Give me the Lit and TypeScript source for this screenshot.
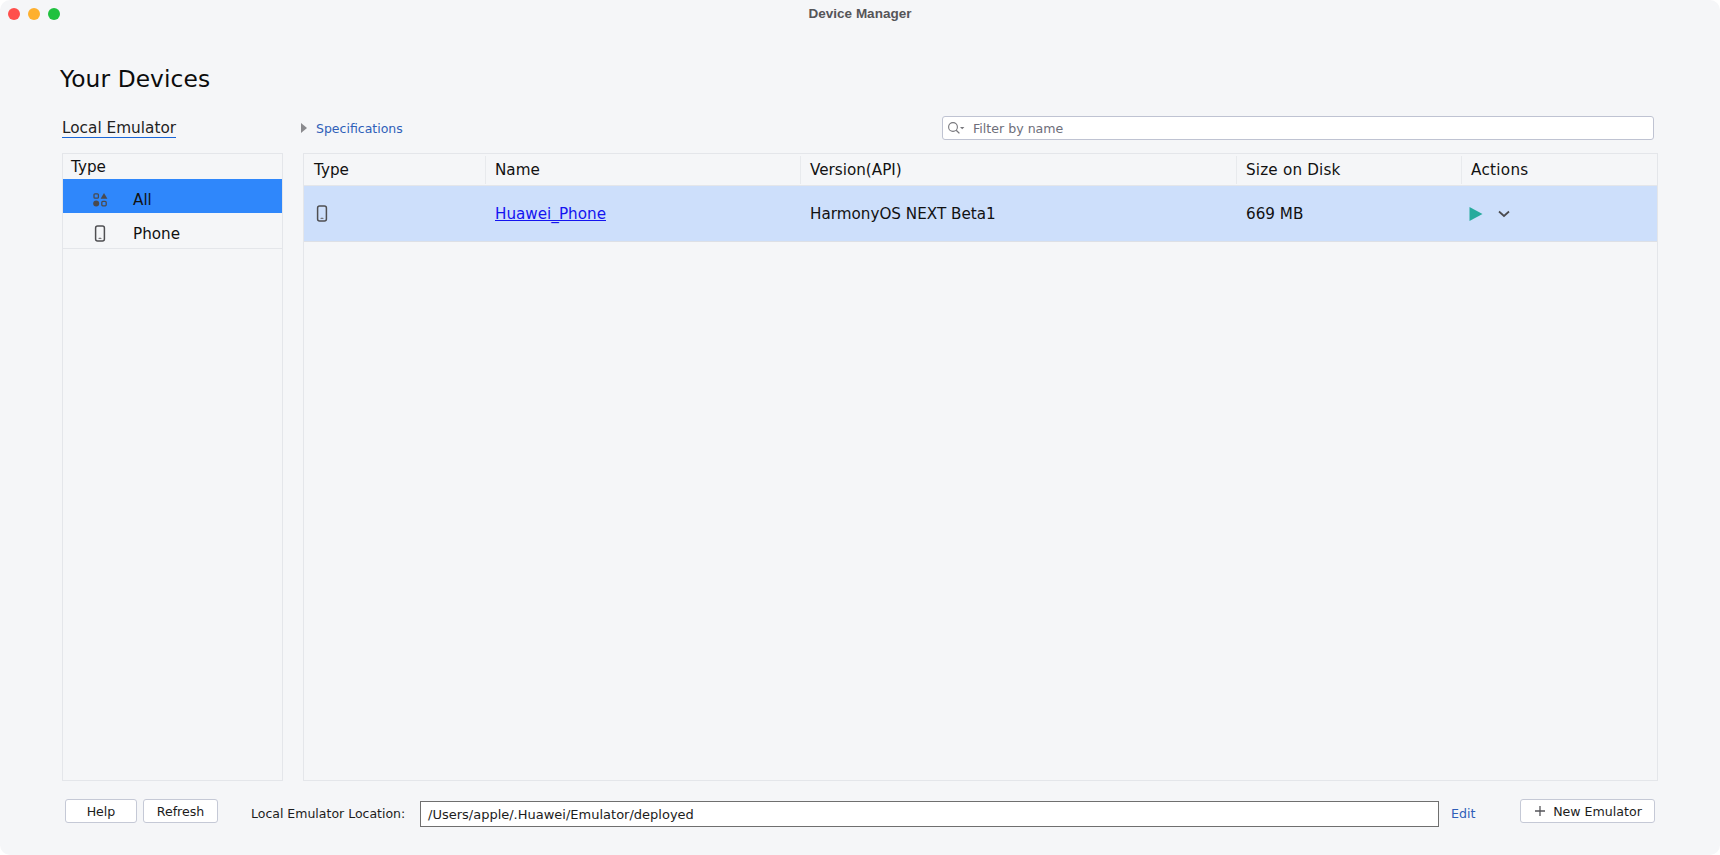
import { LitElement, html, css } from "lit";
import { customElement } from "lit/decorators.js";

const phone = html`<svg width="12" height="17" viewBox="0 0 12 17" fill="none"><rect x="1.6" y="1" width="8.8" height="15" rx="2" stroke="#4f4f52" stroke-width="1.5"/><rect x="4.5" y="12.8" width="3" height="1.3" rx=".6" fill="#77777b"/></svg>`;

@customElement("app-root")
export class AppRoot extends LitElement {
  static styles = css`
    :host { display: block; width: 1720px; height: 855px; background: #fff; font-family: "DejaVu Sans", sans-serif; color: #111; }
    * { box-sizing: border-box; }
    .win { width: 1720px; height: 855px; background: #f5f6f8; border-radius: 10px; display: flex; flex-direction: column; overflow: hidden; }
    .titlebar { height: 28px; flex: none; display: flex; align-items: center; position: relative; padding-left: 8px; gap: 8px; }
    .light { width: 12px; height: 12px; border-radius: 50%; }
    .red { background: #ff4f4c; } .yellow { background: #feb02f; } .green { background: #20c13f; }
    .wintitle { position: absolute; left: 0; right: 0; top: 6px; text-align: center; font: bold 13.5px/16px "Liberation Sans", sans-serif; color: #555558; }
    .main { flex: 1; display: flex; flex-direction: column; padding: 34px 62px 0 62px; min-height: 0; }
    h1 { margin: 0 0 0 -2px; font-size: 23.3px; line-height: 34px; font-weight: 400; letter-spacing: .1px; height: 34px; color: #0c0c0c; }
    .tabline { display: flex; align-items: center; height: 32px; margin-top: 16px; }
    .tab { width: 221px; flex: none; display: flex; }
    .tab span { font-size: 15.3px; line-height: 18px; color: #222; border-bottom: 1px solid #1a66d6; padding-top: 1px; }
    .spec { display: flex; align-items: center; margin-left: 18px; color: #2f5fb8; font-size: 12.5px; }
    .tri { width: 0; height: 0; border-left: 6px solid #8a8a8e; border-top: 5px solid transparent; border-bottom: 5px solid transparent; margin-right: 9px; }
    .filter { margin-left: auto; margin-right: 4px; width: 712px; height: 24px; background: #fff; border: 1px solid #bfc3d2; border-radius: 3px; display: flex; align-items: center; padding-left: 4px; gap: 8px; color: #6e6e7a; font-size: 12.6px; }
    .content { flex: 1; display: flex; gap: 20px; margin-top: 9px; min-height: 0; }
    .side { width: 221px; flex: none; border: 1px solid #e4e6ea; display: flex; flex-direction: column; }
    .sidehead { height: 25px; padding: 1px 0 0 8px; font-size: 15.2px; line-height: 25px; }
    .siderow { display: flex; align-items: center; height: 34px; padding-top: 7px; font-size: 15.2px; }
    .siderow.sel { background: #2f87fb; }
    .siderow.plain { height: 36px; padding-top: 6px; border-bottom: 1px solid #e4e6ea; }
    .ic { width: 70px; display: flex; justify-content: center; padding-left: 4px; flex: none; }
    .table { flex: 1; border: 1px solid #e4e6ea; display: flex; flex-direction: column; }
    .thead, .trow { display: grid; grid-template-columns: 182px 315px 436px 225px 1fr; }
    .thead { height: 32px; border-bottom: 1px solid #e4e6ea; font-size: 15.2px; align-items: center; }
    .th { height: 28px; line-height: 28px; padding-left: 9px; border-right: 1px solid #e8eaed; margin-top: 1px; }
    .th.first { padding-left: 10px; }
    .th.size { letter-spacing: .18px; }
    .th:last-child { border-right: 0; letter-spacing: .3px; }
    .trow { height: 56px; background: #cddffb; border-bottom: 1px solid #dde0e6; font-size: 15.2px; align-items: center; }
    .td { padding-left: 9px; display: flex; align-items: center; }
    .td.first { padding-left: 12px; }
    .td.last { padding-left: 7px; gap: 15px; }
    a { color: #1414f0; text-decoration: underline; }
    .footer { height: 74px; flex: none; display: flex; align-items: flex-start; padding-top: 18px; }
    button { font: inherit; font-size: 12.6px; height: 24px; padding: 0; background: #fff; color: #1c1c1c; border: 1px solid #c5c9d6; border-radius: 3px; display: flex; align-items: center; justify-content: center; gap: 7px; }
    .help { width: 72px; margin-left: 3px; }
    .refresh { width: 75px; margin-left: 6px; }
    .loc { margin-left: 33px; font-size: 12.5px; margin-top: 7px; line-height: 16px; width: 169px; flex: none; color: #1c1c1c; }
    .path { width: 1019px; height: 26px; margin-top: 2px; background: #fff; border: 1px solid #6f6f6f; padding-left: 7px; font-size: 13px; line-height: 26px; color: #1c1c1c; }
    .edit { margin-left: 12px; margin-top: 7px; line-height: 16px; font-size: 12.6px; color: #2f5fb8; }
    .new { width: 135px; margin-left: auto; margin-right: 3px; padding-left: 1px; }
  `;

  render() {
    return html`<div class="win">
      <div class="titlebar">
        <div class="light red"></div><div class="light yellow"></div><div class="light green"></div>
        <div class="wintitle">Device Manager</div>
      </div>
      <div class="main">
        <h1>Your Devices</h1>
        <div class="tabline">
          <div class="tab"><span>Local Emulator</span></div>
          <div class="spec"><div class="tri"></div>Specifications</div>
          <div class="filter">
            <svg width="18" height="14" viewBox="0 0 18 14" fill="none"><circle cx="6" cy="6" r="4.4" stroke="#77777c" stroke-width="1.1"/><path d="M9.2 9.2l3.2 3.2" stroke="#77777c" stroke-width="1.3"/><path d="M13 6h4.4l-2.2 2.2z" fill="#77777c"/></svg>
            Filter by name
          </div>
        </div>
        <div class="content">
          <div class="side">
            <div class="sidehead">Type</div>
            <div class="siderow sel"><div class="ic"><svg width="15" height="14" viewBox="0 0 15 14" fill="none"><rect x="1" y=".8" width="4.4" height="4.4" rx="1" stroke="#4a4a4e" stroke-width="1.3"/><path d="M11 0l3.4 5.8H7.6z" fill="#4a4a4e"/><circle cx="3.2" cy="10.6" r="3" fill="#4a4a4e"/><rect x="8.8" y="8.4" width="4.4" height="4.4" rx="1" stroke="#4a4a4e" stroke-width="1.3"/></svg></div>All</div>
            <div class="siderow plain"><div class="ic">${phone}</div>Phone</div>
          </div>
          <div class="table">
            <div class="thead">
              <div class="th first">Type</div><div class="th">Name</div><div class="th">Version(API)</div><div class="th size">Size on Disk</div><div class="th">Actions</div>
            </div>
            <div class="trow">
              <div class="td first">${phone}</div>
              <div class="td"><a>Huawei_Phone</a></div>
              <div class="td">HarmonyOS NEXT Beta1</div>
              <div class="td">669 MB</div>
              <div class="td last">
                <svg width="14" height="14" viewBox="0 0 14 14"><path d="M0.5 0L13.5 7L0.5 14z" fill="#27ab9d"/></svg>
                <svg width="12" height="8" viewBox="0 0 12 8" fill="none"><path d="M1 1.5l5 4.5 5-4.5" stroke="#4a4a4e" stroke-width="1.7"/></svg>
              </div>
            </div>
          </div>
        </div>
        <div class="footer">
          <button class="help">Help</button>
          <button class="refresh">Refresh</button>
          <div class="loc">Local Emulator Location:</div>
          <div class="path">/Users/apple/.Huawei/Emulator/deployed</div>
          <div class="edit">Edit</div>
          <button class="new"><svg width="12" height="12" viewBox="0 0 12 12"><path d="M6 1v10M1 6h10" stroke="#55555a" stroke-width="1.3"/></svg>New Emulator</button>
        </div>
      </div>
    </div>`;
  }
}
